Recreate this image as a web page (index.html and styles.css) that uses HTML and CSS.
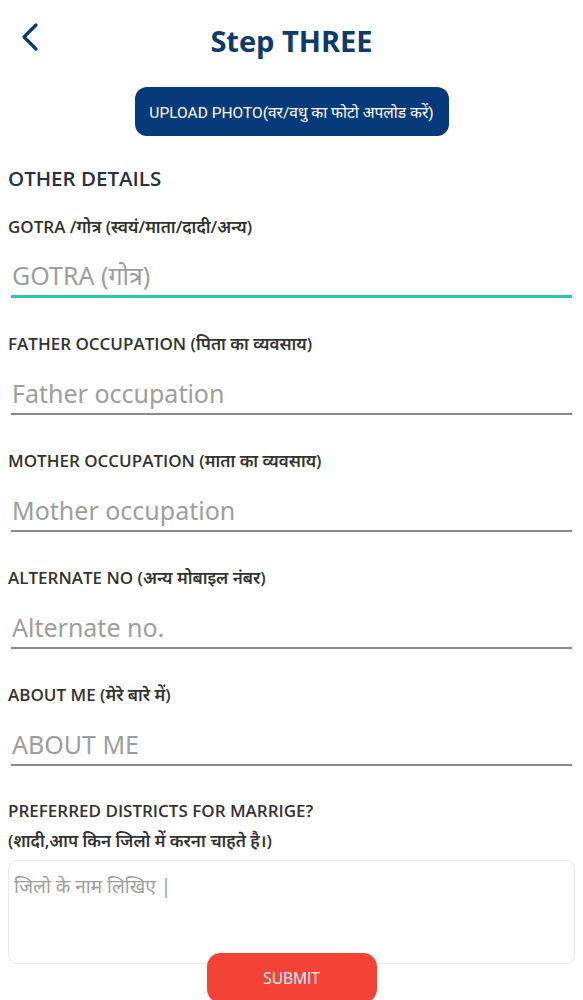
FILE: index.html
```html
<!DOCTYPE html>
<html lang="en">
<head>
    <meta charset="UTF-8">
    <meta name="viewport" content="width=device-width, initial-scale=1.0">
    <title>Step THREE</title>
    <link rel="stylesheet" href="styles.css">
</head>
<body>
    <div class="header">
        <button class="back-btn" aria-label="Back">
            <svg width="20" height="30" viewBox="0 0 20 30">
                <path d="M16 3 L4 15 L16 27" fill="none" stroke="#0e3a6e" stroke-width="3.2" stroke-linecap="round" stroke-linejoin="round"/>
            </svg>
        </button>
        <h1>Step THREE</h1>
    </div>

    <div class="upload-row">
        <button class="upload-btn">UPLOAD PHOTO(वर/वधु का फोटो अपलोड करें)</button>
    </div>

    <div class="form">
        <h2 class="section-title">OTHER DETAILS</h2>

        <div class="field">
            <label>GOTRA /गोत्र (स्वयं/माता/दादी/अन्य)</label>
            <input type="text" class="line-input focused" placeholder="GOTRA (गोत्र)">
        </div>

        <div class="field">
            <label>FATHER OCCUPATION (पिता का व्यवसाय)</label>
            <input type="text" class="line-input" placeholder="Father occupation">
        </div>

        <div class="field">
            <label>MOTHER OCCUPATION (माता का व्यवसाय)</label>
            <input type="text" class="line-input" placeholder="Mother occupation">
        </div>

        <div class="field">
            <label>ALTERNATE NO (अन्य मोबाइल नंबर)</label>
            <input type="text" class="line-input" placeholder="Alternate no.">
        </div>

        <div class="field">
            <label>ABOUT ME (मेरे बारे में)</label>
            <input type="text" class="line-input" placeholder="ABOUT ME">
        </div>

        <div class="field-area">
            <label>PREFERRED DISTRICTS FOR MARRIGE?<br>(शादी,आप किन जिलो में करना चाहते है।)</label>
            <textarea class="area-input" placeholder="जिलो के नाम लिखिए |"></textarea>
        </div>

        <div class="submit-row">
            <button class="submit-btn">SUBMIT</button>
        </div>
    </div>
</body>
</html>
```

FILE: styles.css
```css
body {
    margin: 0;
    font-family: "Open Sans", "Noto Sans", sans-serif;
    background-color: #fff;
    color: #333;
}

.header {
    position: relative;
    height: 84px;
    display: flex;
    align-items: center;
    justify-content: center;
}

.back-btn {
    position: absolute;
    left: 20px;
    top: 22px;
    background: none;
    border: none;
    padding: 0;
    cursor: pointer;
}

h1 {
    margin: -4px 0 0;
    font-size: 29px;
    font-weight: 700;
    color: #0e3a6e;
}

.upload-row {
    display: flex;
    justify-content: center;
    margin-top: 3px;
}

.upload-btn {
    width: 314px;
    height: 49px;
    background-color: #073a7a;
    color: #fff;
    border: none;
    border-radius: 12px;
    font-family: Roboto, "Noto Sans", sans-serif;
    font-size: 15.5px;
    padding: 0;
    cursor: pointer;
}

.form {
    padding: 0 8px;
}

.section-title {
    margin: 30px 0 0;
    height: 24px;
    line-height: 24px;
    font-size: 20.5px;
    font-weight: 600;
    color: #2a2f45;
}

.field {
    height: 117px;
}

.field:first-of-type {
    margin-top: 25px;
}

.field label,
.field-area label {
    display: block;
    font-size: 17px;
    font-weight: 600;
    line-height: 24px;
    color: #333;
}

.line-input {
    display: block;
    box-sizing: border-box;
    width: 561px;
    height: 43px;
    margin: 16px 0 0 3px;
    padding: 0 1px;
    border: none;
    border-bottom: 2px solid #8a8a8a;
    font-family: "Noto Sans", sans-serif;
    font-size: 25px;
    color: #333;
    outline: none;
}

.line-input::placeholder {
    color: #9e9e9e;
}

.line-input.focused {
    border-bottom: 3px solid #2ec4b6;
}

.field-area {
    margin-top: -4px;
}

.field-area label {
    line-height: 30px;
}

.area-input {
    display: block;
    box-sizing: border-box;
    width: 567px;
    height: 104px;
    margin-top: 4px;
    padding: 12px 5px;
    border: 1px solid #eaeaea;
    border-radius: 8px;
    font-family: "Noto Sans", sans-serif;
    font-size: 19px;
    resize: none;
    outline: none;
}

.area-input::placeholder {
    color: #9e9e9e;
}

.submit-row {
    display: flex;
    justify-content: center;
    margin-top: -11px;
}

.submit-btn {
    position: relative;
    width: 170px;
    height: 50px;
    background-color: #f44336;
    color: #fff;
    border: none;
    border-radius: 14px;
    font-family: "Open Sans", sans-serif;
    font-size: 15.5px;
    padding: 0;
    cursor: pointer;
}
```
